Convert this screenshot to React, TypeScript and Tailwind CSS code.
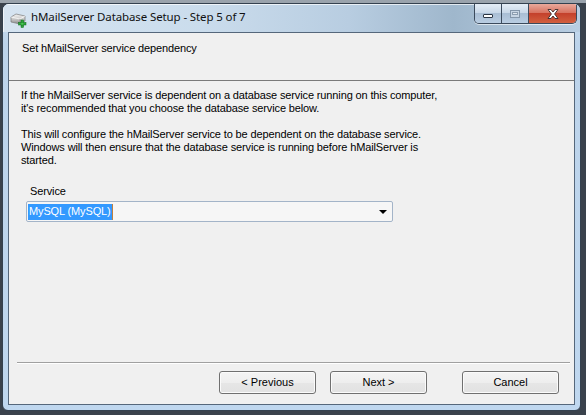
import React from "react";

function AppIcon() {
  return (
    <svg width="17" height="15" viewBox="0 0 17 15">
      <defs>
        <linearGradient id="dr" x1="0" y1="0" x2="0" y2="1">
          <stop offset="0" stopColor="#f4f4f4" />
          <stop offset="0.5" stopColor="#c9c9c9" />
          <stop offset="1" stopColor="#8a8a8a" />
        </linearGradient>
      </defs>
      <path d="M1 4 L6 1 L15 3 L15 8 L10 11 L1 9 Z" fill="url(#dr)" stroke="#7a7a7a" strokeWidth="0.7" />
      <path d="M1 4 L10 6 L15 3" fill="none" stroke="#ffffff" strokeWidth="0.7" />
      <path d="M10 6 L10 11" stroke="#8a8a8a" strokeWidth="0.7" />
      <rect x="11" y="7" width="2.6" height="7.5" fill="#2fa33a" stroke="#0f6e1c" strokeWidth="0.5" />
      <rect x="8.6" y="9.4" width="7.4" height="2.6" fill="#2fa33a" stroke="#0f6e1c" strokeWidth="0.5" />
      <rect x="11.3" y="9.7" width="2" height="2" fill="#4cc656" />
    </svg>
  );
}

function CaptionButtons() {
  return (
    <div className="flex h-[20px] rounded-b-[5px] border border-t-0 border-[#3b4a5c] overflow-hidden shadow-[0_1px_0_rgba(255,255,255,0.6)]">
      <div className="w-[27px] h-full flex items-end justify-center pb-[5px] border-r border-[#3b4a5c] bg-[linear-gradient(180deg,#e4edf6_0%,#c9d8e8_45%,#a9bed4_50%,#b9cde2_100%)]">
        <div className="w-[10px] h-[4px] bg-white border border-[#2b3644] rounded-[1px]" />
      </div>
      <div className="w-[27px] h-full flex items-center justify-center border-r border-[#3b4a5c] bg-[linear-gradient(180deg,#e4edf6_0%,#c9d8e8_45%,#a9bed4_50%,#b9cde2_100%)]">
        <div className="w-[10px] h-[8px] border border-[#8496aa] bg-[#c7d5e4] flex items-center justify-center">
          <div className="w-[6px] h-[3px] border border-[#8c9db0] bg-[#dfe7ef]" />
        </div>
      </div>
      <div className="w-[47px] h-full flex items-center justify-center bg-[linear-gradient(180deg,#e9a99b_0%,#d87462_45%,#c4412c_50%,#d2603f_100%)]">
        <svg width="14" height="12" viewBox="0 0 14 12">
          <path d="M2 1.5 L5 1.5 L7 4 L9 1.5 L12 1.5 L8.6 6 L12 10.5 L9 10.5 L7 8 L5 10.5 L2 10.5 L5.4 6 Z" fill="#ffffff" stroke="#3a2a2a" strokeWidth="0.9" strokeLinejoin="round" />
        </svg>
      </div>
    </div>
  );
}

function Button({ label }: { label: string }) {
  return (
    <div className="w-[97px] h-[23px] rounded-[3px] border border-[#707070] bg-[linear-gradient(180deg,#f4f4f4_0%,#eeeeee_50%,#e6e6e6_51%,#e2e2e2_100%)] shadow-[inset_0_0_0_1px_#fbfbfb] flex items-center justify-center text-[11px] text-black">
      {label}
    </div>
  );
}

export default function App() {
  const sans = { fontFamily: '"Liberation Sans", Arial, sans-serif' };
  return (
    <div className="w-[586px] h-[415px] overflow-hidden bg-[#3a424c]" style={sans}>
      <div className="h-[3px] w-full bg-[#9aa3ac]" />
      <div className="ml-[2px] w-[579px] h-[408px] rounded-t-[7px] rounded-b-[6px] border border-[#34414f] bg-[linear-gradient(180deg,#c9dcee_0%,#bcd3ea_10%,#bfd7ef_100%)] flex flex-col overflow-hidden">
        {/* title bar */}
        <div className="h-[28px] shrink-0 flex items-start bg-[linear-gradient(90deg,#d6e4f1_0%,#cadcec_35%,#b8cde1_60%,#9fb7cc_78%,#b9cee2_100%)] shadow-[inset_0_1px_0_rgba(255,255,255,0.7),inset_1px_0_0_rgba(255,255,255,0.6)]">
          <div className="ml-[7px] mt-[9px]">
            <AppIcon />
          </div>
          <div className="ml-[4px] mt-[5px] text-[11.5px] leading-[16px] tracking-[-0.12px] text-[#111] whitespace-nowrap" style={{ fontFamily: '"Noto Sans", "Open Sans", sans-serif' }}>
            hMailServer Database Setup - Step 5 of 7
          </div>
          <div className="ml-auto mr-[3px]">
            <CaptionButtons />
          </div>
        </div>
        {/* client */}
        <div className="mx-[5px] flex-1 border border-[#55677b] bg-[#f0f0f0] flex flex-col text-[11px] leading-[13px] tracking-[-0.13px] text-black">
          <div className="h-[48px] shrink-0 border-b border-[#7a7a7a] pl-[13px] pt-[9px]">
            Set hMailServer service dependency
          </div>
          <div className="pl-[12px] mt-[8px]">
            <div>If the hMailServer service is dependent on a database service running on this computer,</div>
            <div>it's recommended that you choose the database service below.</div>
          </div>
          <div className="pl-[12px] mt-[13px]">
            <div>This will configure the hMailServer service to be dependent on the database service.</div>
            <div>Windows will then ensure that the database service is running before hMailServer is</div>
            <div>started.</div>
          </div>
          <div className="pl-[21px] mt-[18px]">Service</div>
          <div className="ml-[17px] mt-[3px] w-[367px] h-[21px] border border-[#a3b4c8] rounded-[2px] bg-[#f6f6f6] flex items-center pl-[1px] pr-[4px]">
            <div className="h-[16px] px-[1px] bg-[#3399ff] text-white flex items-center border-r border-[#c08040]">
              MySQL (MySQL)
            </div>
            <div className="ml-auto w-0 h-0 border-l-[4px] border-r-[4px] border-t-[4px] border-l-transparent border-r-transparent border-t-black mr-[1px]" />
          </div>
          <div className="flex-1" />
          <div className="ml-[8px] w-[553px] h-[2px] border-t border-[#a0a0a0] border-b border-b-white" />
          <div className="flex mt-[7px] mb-[10px] pr-[15px] justify-end tracking-normal">
            <Button label="< Previous" />
            <div className="w-[14px]" />
            <Button label="Next >" />
            <div className="w-[35px]" />
            <Button label="Cancel" />
          </div>
        </div>
        <div className="h-[5px] shrink-0" />
      </div>
    </div>
  );
}
